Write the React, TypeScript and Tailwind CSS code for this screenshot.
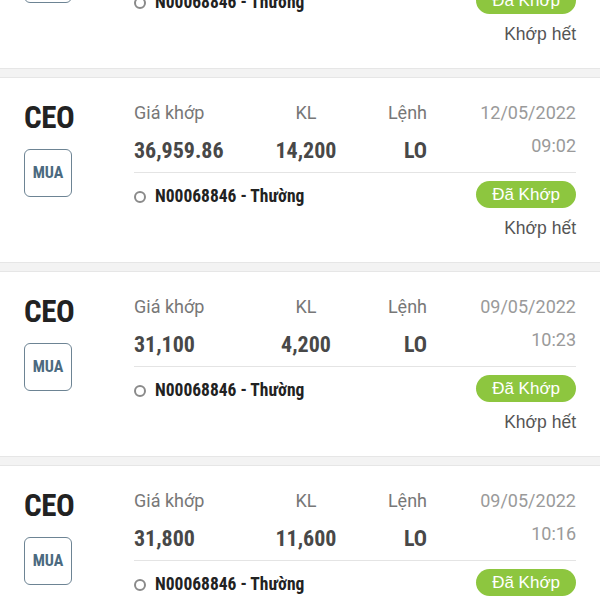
import React from 'react'

type Order = {
  symbol: string
  side: string
  price: string
  qty: string
  type: string
  date: string
  time: string
}

const orders: Order[] = [
  { symbol: 'CEO', side: 'MUA', price: '33,500', qty: '9,000', type: 'LO', date: '13/05/2022', time: '09:15' },
  { symbol: 'CEO', side: 'MUA', price: '36,959.86', qty: '14,200', type: 'LO', date: '12/05/2022', time: '09:02' },
  { symbol: 'CEO', side: 'MUA', price: '31,100', qty: '4,200', type: 'LO', date: '09/05/2022', time: '10:23' },
  { symbol: 'CEO', side: 'MUA', price: '31,800', qty: '11,600', type: 'LO', date: '09/05/2022', time: '10:16' },
]

const condensed = "font-['Roboto_Condensed','Liberation_Sans_Narrow','DejaVu_Sans_Condensed',Roboto,sans-serif]"

function OrderCard({ o }: { o: Order }) {
  return (
    <div className="flex bg-white pl-6 pr-6 pt-[23px] pb-[22px]">
      {/* mã + chiều lệnh */}
      <div className="w-[110px] shrink-0 flex flex-col">
        <div className={`${condensed} h-[30px] mt-[2px] text-[31px] leading-[30px] font-bold text-[#222] tracking-[-0.5px]`}>
          {o.symbol}
        </div>
        <div className="mt-[16px] w-12 h-12 rounded-md border-[1.5px] border-[#6d8494] flex items-center justify-center">
          <span className={`${condensed} text-[16px] font-bold text-[#4b6a80]`}>{o.side}</span>
        </div>
      </div>

      <div className="flex-1 flex flex-col">
        <div className="grid grid-cols-[126px_92px_75px_1fr]">
          <div className="h-6 leading-6 text-[18px] text-[#777] font-['Roboto',sans-serif]">Giá khớp</div>
          <div className="h-6 leading-6 text-[18px] text-[#777] text-center font-['Roboto',sans-serif]">KL</div>
          <div className="h-6 leading-6 text-[18px] text-[#777] text-right font-['Roboto',sans-serif]">Lệnh</div>
          <div className="row-span-2 flex flex-col items-end text-[18px] text-[#9a9a9a] font-['Roboto',sans-serif]">
            <div className="h-6 leading-6">{o.date}</div>
            <div className="h-6 leading-6 mt-[9px]">{o.time}</div>
          </div>
          <div className={`${condensed} mt-3 h-7 leading-7 text-[22px] font-bold text-[#484848]`}>{o.price}</div>
          <div className={`${condensed} mt-3 h-7 leading-7 text-[22px] font-bold text-[#484848] text-center`}>{o.qty}</div>
          <div className={`${condensed} mt-3 h-7 leading-7 text-[22px] font-bold text-[#484848] text-right`}>{o.type}</div>
        </div>

        <div className="mt-[7px] border-t border-[#e4e4e4]" />

        <div className="mt-2 flex items-center justify-between h-[27px]">
          <div className="flex items-center pt-[4px]">
            <span className="w-[12px] h-[12px] rounded-full border-2 border-[#8a8a8a]" />
            <span className={`${condensed} ml-[9px] text-[17.5px] font-bold text-[#222]`}>N00068846 - Thường</span>
          </div>
          <span className="h-[27px] px-[16px] rounded-full bg-[#8dc63f] text-white text-[17px] leading-[27px] font-['Liberation_Sans',sans-serif]">
            Đã Khớp
          </span>
        </div>

        <div className="mt-2 h-6 leading-6 text-right text-[17.5px] text-[#555] font-['Liberation_Sans',sans-serif]">
          Khớp hết
        </div>
      </div>
    </div>
  )
}

export default function App() {
  return (
    <div className="w-[600px] h-[600px] overflow-hidden bg-white">
      <div className="mt-[-116px]">
        {orders.map((o, i) => (
          <div key={i}>
            <OrderCard o={o} />
            <div className="h-[10px] bg-[#f3f3f3] border-y border-[#e6e6e6]" />
          </div>
        ))}
      </div>
    </div>
  )
}
